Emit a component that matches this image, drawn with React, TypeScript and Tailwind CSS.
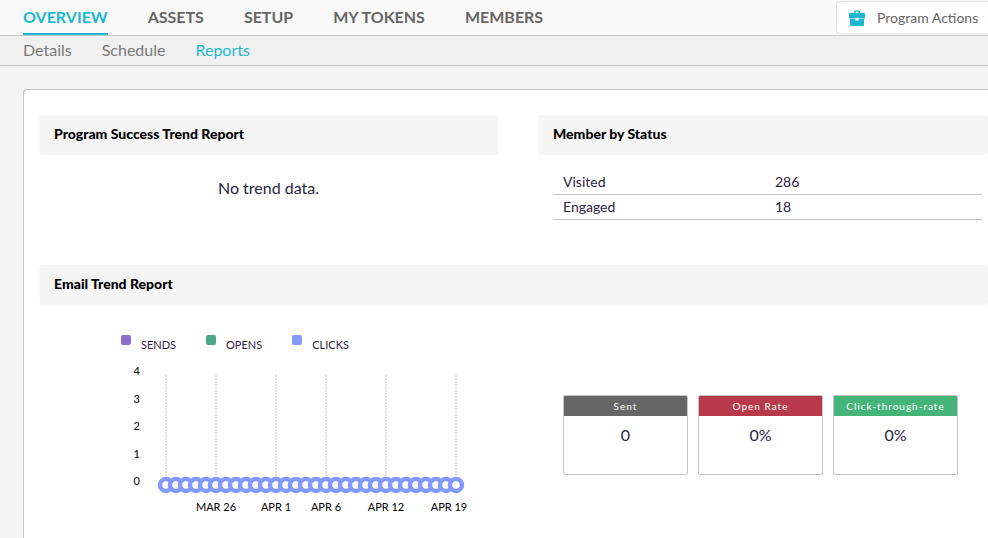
const tabs = ["OVERVIEW", "ASSETS", "SETUP", "MY TOKENS", "MEMBERS"];
const subTabs = ["Details", "Schedule", "Reports"];

const members = [
  { status: "Visited", count: 286 },
  { status: "Engaged", count: 18 },
];

const legend = [
  { label: "SENDS", color: "bg-[#8f6fcb]" },
  { label: "OPENS", color: "bg-[#4ba983]" },
  { label: "CLICKS", color: "bg-[#8399ff]" },
];

const rates = [
  { label: "Sent", value: "0", color: "bg-[#666666]" },
  { label: "Open Rate", value: "0%", color: "bg-[#b83a4a]" },
  { label: "Click-through-rate", value: "0%", color: "bg-[#45b478]" },
];

const days = Array.from({ length: 30 }, (_, i) => i);
const gridDays = [0, 5, 11, 16, 22, 29];
const dateLabels = [
  { x: 95, text: "MAR 26" },
  { x: 155, text: "APR 1" },
  { x: 205, text: "APR 6" },
  { x: 265, text: "APR 12" },
  { x: 328, text: "APR 19" },
];

function SectionTitle({ children }: { children: string }) {
  return (
    <h2 className="h-10 rounded-sm bg-[#f5f5f5] px-[15px] text-sm leading-[38px] font-black text-black">
      {children}
    </h2>
  );
}

function BriefcaseIcon() {
  return (
    <svg width="16" height="16" viewBox="0 0 16 16" aria-hidden="true">
      <path
        fill="#1cb8d2"
        fillRule="evenodd"
        d="M5 3V1.500Q5 .5 6 .5h4q1 0 1 1V3h4q1 0 1 1v4.500H9.700V7.800H6.300v.700H0V4q0-1 1-1h4Zm1.500 0h3V1.800h-3V3Z"
      />
      <path
        fill="#1cb8d2"
        d="M1 9h5.300v1.500h3.400V9H15v6q0 1-1 1H2q-1 0-1-1V9Z"
      />
    </svg>
  );
}

function TrendChart() {
  return (
    <svg
      width="360"
      height="160"
      viewBox="0 0 360 160"
      role="img"
      aria-label="Email trend"
      className="block text-[11px]"
    >
      {[4, 3, 2, 1, 0].map((n) => (
        <text key={n} x="19" y={125 - Math.floor(n * 27.5)} textAnchor="end">
          {n}
        </text>
      ))}
      {gridDays.map((d) => (
        <line
          key={d}
          x1={45 + d * 10}
          x2={45 + d * 10}
          y1="15"
          y2="125"
          stroke="#e2e2e2"
          strokeWidth="2"
          strokeDasharray="2 1"
        />
      ))}
      {days.map((d) => (
        <circle
          key={d}
          cx={45 + d * 10}
          cy="125"
          r="6"
          fill="white"
          stroke="#8399ff"
          strokeWidth="4.500"
        />
      ))}
      {dateLabels.map((l) => (
        <text key={l.text} x={l.x} y="151" textAnchor="middle">
          {l.text}
        </text>
      ))}
    </svg>
  );
}

export default function App() {
  return (
    <div className="flex min-h-screen flex-col overflow-hidden bg-[#f5f5f5] font-['Lato',sans-serif] text-[#2b2540]">
      <header className="flex h-9 items-start justify-between border-b border-[#c8c8c8] bg-[#fafafa] pl-[23px]">
        <nav className="flex gap-10">
          {tabs.map((t, i) => (
            <a
              key={t}
              href="#"
              className={
                i === 0
                  ? "h-[35px] border-b-2 border-[#1cb8d2] text-base leading-[34px] font-bold text-[#1cb8d2]"
                  : "h-[35px] text-base leading-[34px] font-bold text-[#666666]"
              }
            >
              {t}
            </a>
          ))}
        </nav>
        <button className="mt-px flex h-[33px] w-[152px] items-center gap-3 rounded-l-sm border border-r-0 border-[#e3e3ee] bg-white pl-3 text-sm whitespace-nowrap text-[#666666]">
          <BriefcaseIcon />
          Program Actions
        </button>
      </header>
      <nav className="flex h-[30px] gap-[30px] border-b border-[#c8c8c8] bg-[#f0f0f0] pl-[23px] shadow-xs">
        {subTabs.map((t) => (
          <a
            key={t}
            href="#"
            className={
              t === "Reports"
                ? "text-base leading-7 text-[#1cb8d2]"
                : "text-base leading-7 text-[#7a7a7a]"
            }
          >
            {t}
          </a>
        ))}
      </nav>
      <main className="mt-[23px] ml-[23px] flex-1 rounded-tl-sm border-t border-l border-[#c4c4c4] bg-white pt-[25px] pl-[15px]">
        <div className="grid grid-cols-[459fr_450fr] gap-x-10">
          <section>
            <SectionTitle>Program Success Trend Report</SectionTitle>
            <p className="mt-[21px] text-center text-base">No trend data.</p>
          </section>
          <section className="h-[150px]">
            <SectionTitle>Member by Status</SectionTitle>
            <div className="mt-[15px] pr-[6px] pl-[15px]">
              <table className="w-full table-fixed border-separate border-spacing-0 text-sm">
                <tbody>
                  {members.map((m) => (
                    <tr key={m.status}>
                      <td className="w-[212px] border-b border-[#c4c4c4] pl-[10px] leading-6">
                        {m.status}
                      </td>
                      <td className="border-b border-[#c4c4c4] pl-[10px] leading-6">
                        {m.count}
                      </td>
                    </tr>
                  ))}
                </tbody>
              </table>
            </div>
          </section>
        </div>
        <section>
          <SectionTitle>Email Trend Report</SectionTitle>
          <div className="grid grid-cols-[459fr_450fr] gap-x-10">
            <div className="pt-[30px] pl-[82px]">
              <ul className="flex h-[25px] gap-[30px] text-[11px]">
                {legend.map((l) => (
                  <li key={l.label} className="flex gap-[10px]">
                    <span className={`size-[10px] rounded-xs ${l.color}`} />
                    <span className="pt-[3px] leading-[14px]">{l.label}</span>
                  </li>
                ))}
              </ul>
              <TrendChart />
            </div>
            <dl className="flex gap-[10px] pt-[90px] pl-[25px]">
              {rates.map((r) => (
                <div
                  key={r.label}
                  className="h-20 w-[125px] overflow-hidden rounded-xs border border-[#c4c4c4] text-center"
                >
                  <dt
                    className={`h-5 text-[10px] leading-5 tracking-[1px] text-white ${r.color}`}
                  >
                    {r.label}
                  </dt>
                  <dd className="text-base leading-[38px]">{r.value}</dd>
                </div>
              ))}
            </dl>
          </div>
        </section>
      </main>
    </div>
  );
}
